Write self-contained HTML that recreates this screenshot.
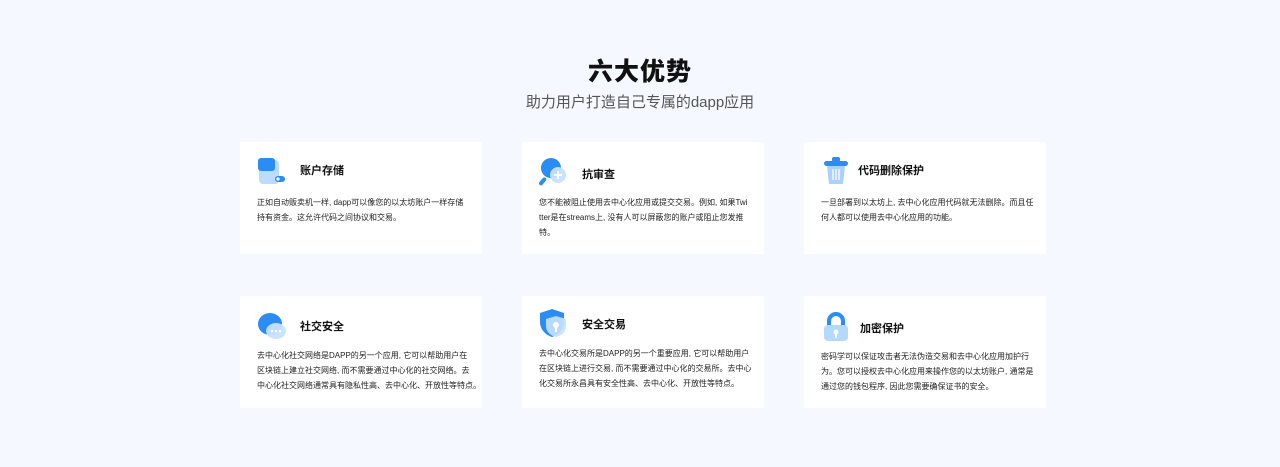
<!DOCTYPE html>
<html><head><meta charset="utf-8"><style>
*{margin:0;padding:0;box-sizing:border-box}
body{width:1280px;height:467px;background:#f5f8fe;font-family:"Liberation Sans","Noto Sans CJK SC",sans-serif;position:relative;overflow:hidden}
h1{position:absolute;top:52px;left:0;width:1280px;text-align:center;font-size:25px;font-weight:900;color:#111;letter-spacing:1px}
.sub{position:absolute;top:91px;left:0;width:1280px;text-align:center;font-size:15px;color:#555}
.card{position:absolute;background:#fff;width:242px;height:112px}
.ic{position:absolute;left:17px;top:15px;width:30px;height:30px}
.t{position:absolute;left:60px;top:20px;font-size:11px;font-weight:700;color:#111}
.d{position:absolute;left:17px;top:53px;font-size:8px;line-height:15px;color:#222;white-space:nowrap}
</style></head><body>
<h1>六大优势</h1>
<div class="sub">助力用户打造自己专属的dapp应用</div>

<div class="card" style="left:240px;top:142px">
<svg class="ic" viewBox="0 0 30 30"><rect x="2" y="3" width="20" height="24" rx="4" fill="#bcdcff"/><rect x="1" y="1" width="17" height="13" rx="3" fill="#2b8cf5"/><rect x="18" y="19" width="10" height="6" rx="3" fill="#2b8cf5"/><circle cx="21" cy="22" r="1.6" fill="#fff"/></svg>
<div class="t">账户存储</div>
<div class="d">正如自动贩卖机一样, dapp可以像您的以太坊账户一样存储<br>持有资金。这允许代码之间协议和交易。</div></div>

<div class="card" style="left:522px;top:142px">
<svg class="ic" viewBox="0 0 30 30"><circle cx="12" cy="11" r="10" fill="#2b8cf5"/><rect x="2" y="20" width="4" height="9" rx="2" fill="#2b8cf5" transform="rotate(40 4 24)"/><circle cx="19" cy="18" r="8" fill="#c7e2ff" opacity=".95"/><path d="M19 14v8M15 18h8" stroke="#fff" stroke-width="2"/></svg>
<div class="t" style="top:24px">抗审查</div>
<div class="d">您不能被阻止使用去中心化应用或提交交易。例如, 如果Twi<br>tter是在streams上, 没有人可以屏蔽您的账户或阻止您发推<br>特。</div></div>

<div class="card" style="left:804px;top:142px">
<svg class="ic" viewBox="0 0 30 30"><rect x="11" y="0" width="8" height="5" rx="2" fill="#2b8cf5"/><rect x="3" y="4" width="24" height="5" rx="2.5" fill="#2b8cf5"/><path d="M6 9h18l-2 18H8z" fill="#a9d2ff"/><path d="M12 12v11M15 12v11M18 12v11" stroke="#fff" stroke-width="1.3"/></svg>
<div class="t" style="left:54px">代码删除保护</div>
<div class="d">一旦部署到以太坊上, 去中心化应用代码就无法删除。而且任<br>何人都可以使用去中心化应用的功能。</div></div>

<div class="card" style="left:240px;top:296px">
<svg class="ic" viewBox="0 0 30 30"><ellipse cx="13" cy="13" rx="12" ry="11" fill="#2b8cf5"/><ellipse cx="19" cy="20" rx="10" ry="8" fill="#c7e2ff" opacity=".95"/><circle cx="15" cy="20" r="1.3" fill="#fff"/><circle cx="19" cy="20" r="1.3" fill="#fff"/><circle cx="23" cy="20" r="1.3" fill="#fff"/></svg>
<div class="t" style="top:22px">社交安全</div>
<div class="d" style="top:52px">去中心化社交网络是DAPP的另一个应用, 它可以帮助用户在<br>区块链上建立社交网络, 而不需要通过中心化的社交网络。去<br>中心化社交网络通常具有隐私性高、去中心化、开放性等特点。</div></div>

<div class="card" style="left:522px;top:296px">
<svg class="ic" viewBox="0 0 30 30" style="top:12px"><path d="M13 1l12 4v9c0 8-6 13-12 15C7 27 1 22 1 14V5z" fill="#2b8cf5"/><path d="M17 8l10 3v7c0 6-5 10-10 11-5-1-10-5-10-11v-7z" fill="#c7e2ff" opacity=".9"/><circle cx="17" cy="17" r="3" fill="#fff"/><rect x="16" y="18" width="2" height="6" fill="#fff"/></svg>
<div class="t" style="top:20px">安全交易</div>
<div class="d" style="top:50px">去中心化交易所是DAPP的另一个重要应用, 它可以帮助用户<br>在区块链上进行交易, 而不需要通过中心化的交易所。去中心<br>化交易所永昌具有安全性高、去中心化、开放性等特点。</div></div>

<div class="card" style="left:804px;top:296px">
<svg class="ic" viewBox="0 0 30 30" style="top:16px"><path d="M8 14V9a7 7 0 0114 0v5" stroke="#2b8cf5" stroke-width="4" fill="none"/><rect x="3" y="13" width="24" height="16" rx="4" fill="#b5d8ff"/><circle cx="15" cy="20" r="2.5" fill="#fff"/><rect x="14" y="21" width="2" height="5" fill="#fff"/></svg>
<div class="t" style="left:56px;top:24px">加密保护</div>
<div class="d" style="top:53px">密码学可以保证攻击者无法伪造交易和去中心化应用加护行<br>为。您可以授权去中心化应用来操作您的以太坊账户, 通常是<br>通过您的钱包程序, 因此您需要确保证书的安全。</div></div>
</body></html>
